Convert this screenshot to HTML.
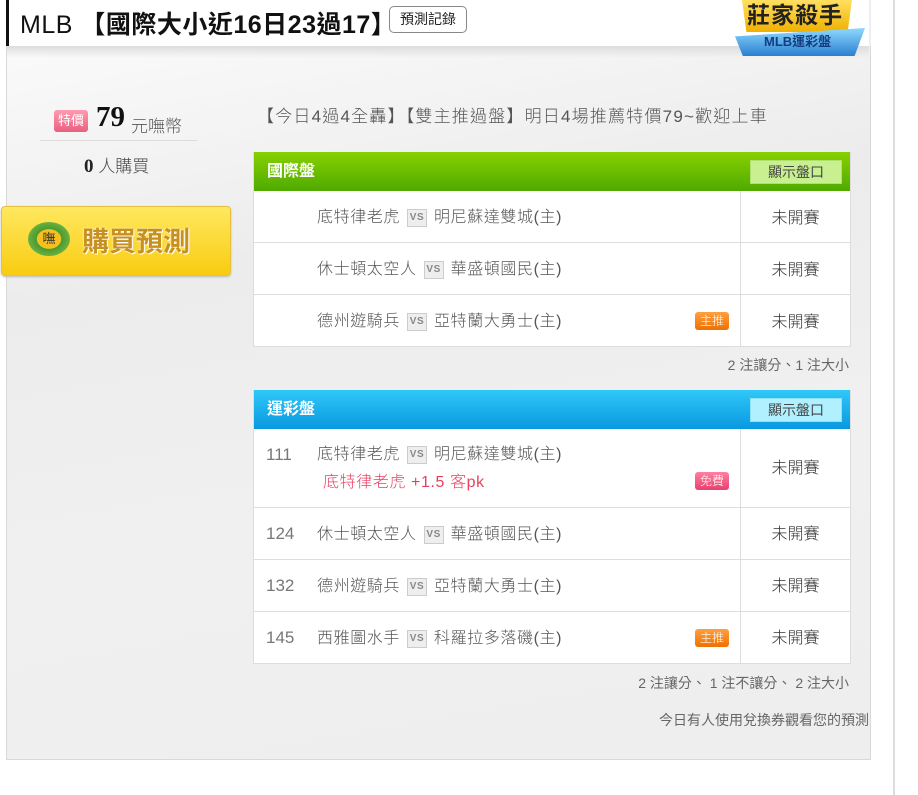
<html><head><style>
body{margin:0;width:918px;height:795px;background:#fff;font-family:"Liberation Sans","Noto Sans CJK TC",sans-serif;position:relative;overflow:hidden;color:#555}
.a{position:absolute}
.panel{left:6px;top:46px;width:863px;height:713px;border:1px solid #d8d8d8;border-top:none;background:linear-gradient(170deg,#fafafa 0%,#ececec 30%,#f0f0f0 60%,#eeeeee 100%)}
.tb{position:absolute;left:253px;width:596px;background:#fff;border:1px solid #ddd;border-top:none}
.hd{height:39px;color:#fff;font-weight:bold;font-size:16px;line-height:39px;padding-left:13px;position:relative}
.btn{position:absolute;right:8px;top:8px;width:90px;height:22px;line-height:22px;text-align:center;font-weight:normal;font-size:14px;color:#444}
.row{position:relative;border-top:1px solid #ddd;font-size:16px;color:#555;font-weight:300}
.row .st{position:absolute;left:486px;top:0;bottom:0;padding-top:2px;box-sizing:border-box;width:110px;border-left:1px solid #ddd;text-align:center;color:#333;font-weight:300}
.vs{display:inline-block;width:18px;height:16px;background:#eee;border:1px solid #ccc;font-size:10px;font-weight:bold;color:#888;line-height:16px;text-align:center;vertical-align:2px;margin:0 7px}
.tag{position:absolute;left:441px;width:34px;height:18px;border-radius:3px;color:#fff;font-size:12px;line-height:18px;text-align:center}
.or{background:linear-gradient(#ffa040,#f07000)}
.pk{background:linear-gradient(#ff80a0,#e84070)}
.num{position:absolute;left:12px;color:#777;font-size:17px;line-height:22px}
.tm{position:absolute;left:63px;line-height:22px;letter-spacing:0.6px}
</style></head><body>
<div class="a" style="left:6px;top:0;width:3px;height:46px;background:#111"></div>
<div class="a" style="left:20px;top:5px;font-size:25px;color:#111;letter-spacing:0.5px">MLB <b>【國際大小近16日23過17】</b></div>
<div class="a" style="left:389px;top:6px;width:76px;height:25px;border:1px solid #888;border-radius:5px;font-size:14px;line-height:25px;text-align:center;color:#222;background:#fff">預測記錄</div>
<div class="panel a"></div>
<div class="a" style="left:6px;top:46px;width:863px;height:12px;background:linear-gradient(#ddd,rgba(240,240,240,0))"></div>
<div class="a" style="left:893px;top:0;width:2px;height:795px;background:#ddd"></div>
<div class="a" style="left:869px;top:0;width:2px;height:46px;background:#eee"></div>
<div class="a" style="left:742px;top:0;width:110px;height:32px;background:linear-gradient(#ffe060,#f0b000);clip-path:polygon(0 0,100% 0,96% 100%,4% 100%)"></div>
<div class="a" style="left:747px;top:-4px;font-size:23px;font-weight:bold;color:#222;letter-spacing:1px">莊家殺手</div>
<div class="a" style="left:735px;top:28px;width:130px;height:28px;background:linear-gradient(#8fd8ff,#2a80d0);clip-path:polygon(0 30%,100% 0,92% 100%,6% 100%);"></div>
<div class="a" style="left:764px;top:31px;font-size:13px;font-weight:bold;color:#123d80">MLB運彩盤</div>
<div class="a" style="left:54px;top:110px;width:34px;height:22px;border-radius:3px;background:linear-gradient(#ff9ab0,#e86080);color:#fff;font-size:13px;line-height:22px;text-align:center">特價</div>
<div class="a" style="left:96px;top:101px;font-family:'Liberation Serif',serif;font-size:29px;font-weight:bold;color:#111">79</div>
<div class="a" style="left:131px;top:112px;font-size:17px;color:#555;font-weight:300">元嘸幣</div>
<div class="a" style="left:40px;top:140px;width:157px;height:1px;background:#ddd"></div>
<div class="a" style="left:84px;top:152px;font-size:17px;color:#444;font-weight:300"><span style="font-family:'Liberation Serif',serif;font-size:19px;font-weight:700;color:#222">0</span> 人購買</div>
<div class="a" style="left:1px;top:206px;width:228px;height:68px;border-radius:4px;background:linear-gradient(#ffe860,#f8cc10);border:1px solid #e8c040;box-shadow:0 1px 2px #bbb"></div>
<div class="a" style="left:28px;top:222px;width:42px;height:34px;border-radius:50%;background:radial-gradient(#f5c020 40%,#4a9a30 42%,#6ab040 70%);color:#333;font-size:13px;line-height:34px;text-align:center">嘸</div>
<div class="a" style="left:82px;top:220px;font-size:27px;font-weight:bold;color:#c89020;text-shadow:0 0 2px #fff,1px 1px 0 #fff">購買預測</div>
<div class="a" style="left:257px;top:102px;font-size:17px;color:#555;letter-spacing:1.2px;font-weight:300">【今日4過4全轟】【雙主推過盤】明日4場推薦特價79~歡迎上車</div>
<div class="tb" style="top:152px">
<div class="hd" style="background:linear-gradient(#88d000,#4faa00)">國際盤<div class="btn" style="background:#c8f090;border:1px solid #b0e070">顯示盤口</div></div>
<div class="row" style="height:51px;border-top:none"><div class="tm" style="top:16px">底特律老虎<span class="vs">VS</span>明尼蘇達雙城(主)</div><div class="st" style="line-height:51px">未開賽</div></div>
<div class="row" style="height:51px"><div class="tm" style="top:16px">休士頓太空人<span class="vs">VS</span>華盛頓國民(主)</div><div class="st" style="line-height:51px">未開賽</div></div>
<div class="row" style="height:51px"><div class="tm" style="top:16px">德州遊騎兵<span class="vs">VS</span>亞特蘭大勇士(主)</div><div class="tag or" style="top:17px">主推</div><div class="st" style="line-height:51px">未開賽</div></div>
</div>
<div class="a" style="right:69px;top:355px;font-size:14px;color:#666">2 注讓分、1 注大小</div>
<div class="tb" style="top:390px">
<div class="hd" style="background:linear-gradient(#30c8f8,#0898e0)">運彩盤<div class="btn" style="background:#b0f0ff;border:1px solid #90e0f8">顯示盤口</div></div>
<div class="row" style="height:78px;border-top:none"><div class="num" style="top:15px">111</div><div class="tm" style="top:15px">底特律老虎<span class="vs">VS</span>明尼蘇達雙城(主)</div><div class="tm" style="top:43px;left:69px;color:#e84060">底特律老虎 +1.5 客pk</div><div class="tag pk" style="top:43px">免費</div><div class="st" style="line-height:76px">未開賽</div></div>
<div class="row" style="height:51px"><div class="num" style="top:15px">124</div><div class="tm" style="top:16px">休士頓太空人<span class="vs">VS</span>華盛頓國民(主)</div><div class="st" style="line-height:49px">未開賽</div></div>
<div class="row" style="height:51px"><div class="num" style="top:15px">132</div><div class="tm" style="top:16px">德州遊騎兵<span class="vs">VS</span>亞特蘭大勇士(主)</div><div class="st" style="line-height:49px">未開賽</div></div>
<div class="row" style="height:51px"><div class="num" style="top:15px">145</div><div class="tm" style="top:16px">西雅圖水手<span class="vs">VS</span>科羅拉多落磯(主)</div><div class="tag or" style="top:17px">主推</div><div class="st" style="line-height:49px">未開賽</div></div>
</div>
<div class="a" style="right:69px;top:673px;font-size:14px;color:#666">2 注讓分、 1 注不讓分、 2 注大小</div>
<div class="a" style="right:49px;top:710px;font-size:14px;color:#666">今日有人使用兌換券觀看您的預測</div>
</body></html>
